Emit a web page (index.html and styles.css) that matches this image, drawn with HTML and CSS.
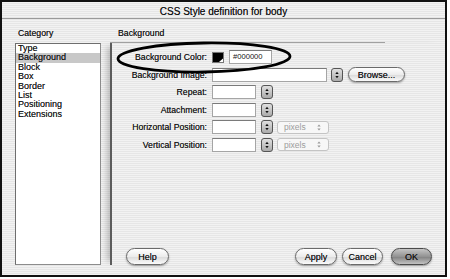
FILE: index.html
```html
<!DOCTYPE html>
<html>
<head>
<meta charset="utf-8">
<link rel="stylesheet" href="styles.css">
</head>
<body>
<div class="window">
  <div class="titlebar">CSS Style definition for body</div>
  <div class="main">
    <div class="left">
      <div class="cat-label">Category</div>
      <ul class="list">
        <li>Type</li>
        <li class="sel">Background</li>
        <li>Block</li>
        <li>Box</li>
        <li>Border</li>
        <li>List</li>
        <li>Positioning</li>
        <li>Extensions</li>
      </ul>
    </div>
    <div class="right">
      <div class="head">Background</div>
      <div class="panel">
        <div class="form">
          <div class="row">
            <span class="lbl">Background Color:</span>
            <svg class="swatch" width="12" height="11" viewBox="0 0 12 11"><rect x="0.5" y="0.5" width="11" height="10" fill="#000" stroke="#777"/><polygon points="7,10 11,10 11,6.5" fill="#fff"/></svg>
            <span class="field w43">#000000</span>
          </div>
          <div class="row">
            <span class="lbl">Background Image:</span>
            <span class="field w115"></span>
            <svg class="stepper" width="12" height="14" viewBox="0 0 12 14"><defs><linearGradient id="sg" x1="0" y1="0" x2="0" y2="1"><stop offset="0" stop-color="#e2e2e2"/><stop offset="1" stop-color="#a9a9a9"/></linearGradient></defs><rect x="0.5" y="0.5" width="11" height="13" rx="2.5" fill="url(#sg)" stroke="#555"/><polygon points="4.3,6 6,3.8 7.7,6" fill="#111"/><polygon points="4.3,8 6,10.2 7.7,8" fill="#111"/></svg>
            <span class="btn browse">Browse...</span>
          </div>
          <div class="row">
            <span class="lbl">Repeat:</span>
            <span class="field w44"></span>
            <svg class="stepper s2" width="12" height="14" viewBox="0 0 12 14"><rect x="0.5" y="0.5" width="11" height="13" rx="2.5" fill="url(#sg)" stroke="#555"/><polygon points="4.3,6 6,3.8 7.7,6" fill="#111"/><polygon points="4.3,8 6,10.2 7.7,8" fill="#111"/></svg>
          </div>
          <div class="row">
            <span class="lbl">Attachment:</span>
            <span class="field w44"></span>
            <svg class="stepper s2" width="12" height="14" viewBox="0 0 12 14"><rect x="0.5" y="0.5" width="11" height="13" rx="2.5" fill="url(#sg)" stroke="#555"/><polygon points="4.3,6 6,3.8 7.7,6" fill="#111"/><polygon points="4.3,8 6,10.2 7.7,8" fill="#111"/></svg>
          </div>
          <div class="row">
            <span class="lbl">Horizontal Position:</span>
            <span class="field w44"></span>
            <svg class="stepper s2" width="12" height="14" viewBox="0 0 12 14"><rect x="0.5" y="0.5" width="11" height="13" rx="2.5" fill="url(#sg)" stroke="#555"/><polygon points="4.3,6 6,3.8 7.7,6" fill="#111"/><polygon points="4.3,8 6,10.2 7.7,8" fill="#111"/></svg>
            <span class="select"><span>pixels</span><svg width="6" height="9" viewBox="0 0 6 9"><polygon points="1.3,3.6 3,1.4 4.7,3.6" fill="#999"/><polygon points="1.3,5.4 3,7.6 4.7,5.4" fill="#999"/></svg></span>
          </div>
          <div class="row">
            <span class="lbl">Vertical Position:</span>
            <span class="field w44"></span>
            <svg class="stepper s2" width="12" height="14" viewBox="0 0 12 14"><rect x="0.5" y="0.5" width="11" height="13" rx="2.5" fill="url(#sg)" stroke="#555"/><polygon points="4.3,6 6,3.8 7.7,6" fill="#111"/><polygon points="4.3,8 6,10.2 7.7,8" fill="#111"/></svg>
            <span class="select"><span>pixels</span><svg width="6" height="9" viewBox="0 0 6 9"><polygon points="1.3,3.6 3,1.4 4.7,3.6" fill="#999"/><polygon points="1.3,5.4 3,7.6 4.7,5.4" fill="#999"/></svg></span>
          </div>
        </div>
        <div class="buttons">
          <span class="btn help">Help</span>
          <span class="spacer"></span>
          <span class="btn apply">Apply</span>
          <span class="btn cancel">Cancel</span>
          <span class="btn ok">OK</span>
        </div>
      </div>
    </div>
  </div>
  <svg class="circle" width="447" height="277" viewBox="0 0 447 277"><ellipse cx="204" cy="57.5" rx="86" ry="14.5" fill="none" stroke="#000" stroke-width="2.8" transform="rotate(-0.8 204 57.5)"/></svg>
</div>
</body>
</html>
```
FILE: styles.css
```css
html, body {
  margin: 0;
  background: #fff;
}
body {
  font-family: "Liberation Sans", Arial, sans-serif;
  font-size: 8.7px;
  color: #141414;
  text-shadow: 0 0 0.4px rgba(0, 0, 0, 0.6);
}
.window {
  position: relative;
  box-sizing: border-box;
  width: 447px;
  height: 277px;
  border: 2px solid #111;
  background: repeating-linear-gradient(to bottom, #f2f2f2 0 1px, #e6e6e6 1px 2px);
  display: flex;
  flex-direction: column;
}
.titlebar {
  box-sizing: border-box;
  height: 17px;
  padding-top: 3px;
  line-height: 13px;
  font-size: 10px;
  text-align: center;
  color: #111;
  border-bottom: 1px solid #9a9a9a;
}
.main {
  flex: 1;
  display: flex;
  padding-top: 9px;
}
.left {
  width: 108px;
  flex: none;
  display: flex;
  flex-direction: column;
}
.cat-label {
  margin-left: 16px;
  height: 15px;
  line-height: 10px;
}
.list {
  margin: 0 0 0 13px;
  padding: 0;
  list-style: none;
  width: 86px;
  height: 222px;
  box-sizing: border-box;
  border: 1px solid #8c8c8c;
  border-top-color: #6e6e6e;
  border-left-color: #6e6e6e;
  background: #fff;
  font-size: 9px;
}
.list li {
  line-height: 9.4px;
  padding-left: 2px;
}
.list li.sel {
  background: #c8c8c8;
}
.right {
  flex: 1;
  display: flex;
  flex-direction: column;
}
.head {
  box-sizing: border-box;
  width: 275px;
  height: 15px;
  padding-left: 8px;
  line-height: 10px;
  border-bottom: 1px solid #a3a3a3;
}
.panel {
  position: relative;
  box-sizing: border-box;
  height: 222px;
  border-left: 2px solid #5c5c5c;
  box-shadow: -7px 0 6px -4px rgba(0, 0, 0, 0.22);
  display: flex;
  flex-direction: column;
  padding-top: 7px;
}
.form {
  display: flex;
  flex-direction: column;
  gap: 3.6px;
}
.row {
  display: flex;
  align-items: center;
  height: 14px;
}
.lbl {
  flex: none;
  width: 95px;
  margin-right: 5px;
  text-align: right;
  white-space: nowrap;
}
.swatch {
  flex: none;
  margin-right: 5px;
}
.field {
  flex: none;
  box-sizing: border-box;
  height: 14px;
  background: #fff;
  border: 1px solid #a5a5a5;
  border-top-color: #7a7a7a;
  font-size: 7.6px;
  line-height: 12px;
  padding-left: 3px;
  text-shadow: none;
}
.w43 { width: 43px; }
.w115 { width: 115px; }
.w44 { width: 44px; }
.stepper {
  flex: none;
  margin-left: 4px;
}
.stepper.s2 {
  margin-left: 5px;
}
.select {
  flex: none;
  box-sizing: border-box;
  width: 52px;
  height: 13px;
  margin-left: 4px;
  border: 1px solid #c4c4c4;
  border-radius: 3px;
  background: #f7f7f7;
  color: #9c9c9c;
  display: flex;
  align-items: center;
  justify-content: space-between;
  padding: 0 6px 0 6px;
  font-size: 8.5px;
  text-shadow: none;
}
.btn {
  flex: none;
  box-sizing: border-box;
  height: 17px;
  border: 1px solid #6a6a6a;
  border-radius: 9px;
  background: linear-gradient(#ffffff, #ececec 50%, #dcdcdc 55%, #fafafa);
  box-shadow: 0 1px 2px rgba(0, 0, 0, 0.35);
  font-size: 9px;
  display: flex;
  align-items: center;
  justify-content: center;
  color: #111;
}
.browse {
  width: 57px;
  height: 15px;
  margin-left: 5px;
}
.buttons {
  margin-top: auto;
  display: flex;
  height: 17px;
  padding: 0 13px 0 14px;
}
.spacer { flex: 1; }
.help { width: 43px; }
.apply { width: 42px; }
.cancel { width: 41px; margin-left: 5px; }
.ok {
  width: 41px;
  margin-left: 8px;
  border-color: #4a4a4a;
  background: linear-gradient(#c4c4c4, #939393 50%, #858585 55%, #c2c2c2);
}
.circle {
  position: absolute;
  left: -2px;
  top: -2px;
  pointer-events: none;
}
```
